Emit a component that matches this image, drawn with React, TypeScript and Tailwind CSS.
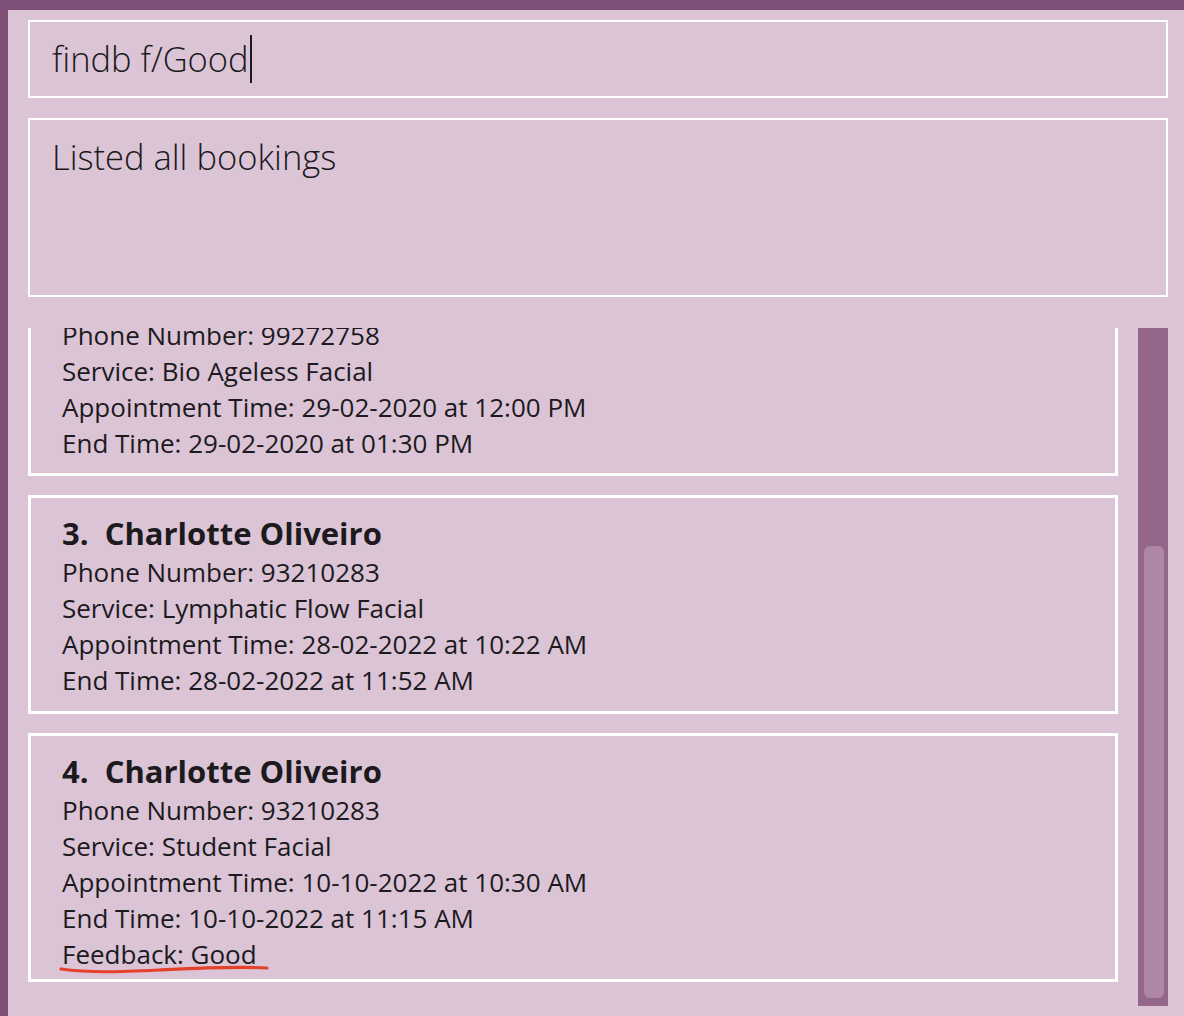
type Booking = {
  index: number;
  name?: string;
  phone: string;
  service: string;
  start: string;
  end: string;
  feedback?: string;
};

// first entry is scrolled past its header, so only the lower lines show
const bookings: Booking[] = [
  {
    index: 2,
    phone: "99272758",
    service: "Bio Ageless Facial",
    start: "29-02-2020 at 12:00 PM",
    end: "29-02-2020 at 01:30 PM",
  },
  {
    index: 3,
    name: "Charlotte Oliveiro",
    phone: "93210283",
    service: "Lymphatic Flow Facial",
    start: "28-02-2022 at 10:22 AM",
    end: "28-02-2022 at 11:52 AM",
  },
  {
    index: 4,
    name: "Charlotte Oliveiro",
    phone: "93210283",
    service: "Student Facial",
    start: "10-10-2022 at 10:30 AM",
    end: "10-10-2022 at 11:15 AM",
    feedback: "Good",
  },
];

const BookingCard = ({ booking, first }: { booking: Booking; first?: boolean }) => {
  return (
    <div
      className={`border-[3px] border-white pl-[31px] pt-[16px] ${first ? "-mt-[30px] pb-[12px]" : "pb-[13px]"}`}
    >
      {booking.name && (
        <div className="h-[40px] -mt-[1px] mb-[1px] flex items-center text-[31px] font-bold text-[#1c1a1d] whitespace-pre">
          {booking.index}.  {booking.name}
        </div>
      )}
      <div className="text-[26px] leading-[36px] text-[#1c1a1d]">
        <div>Phone Number: {booking.phone}</div>
        <div>Service: {booking.service}</div>
        <div>Appointment Time: {booking.start}</div>
        <div>End Time: {booking.end}</div>
        {booking.feedback && (
          <div className="relative w-fit h-[32px] -mb-[2px]">
            Feedback: {booking.feedback}
            <svg
              className="absolute left-[-3px] top-[27px]"
              width="212"
              height="12"
              viewBox="0 0 212 12"
              fill="none"
            >
              <path
                d="M2 6 C 30 10, 60 9, 100 7 C 140 5, 175 3, 208 5"
                stroke="#e4412a"
                strokeWidth="3.2"
                strokeLinecap="round"
              />
            </svg>
          </div>
        )}
      </div>
    </div>
  );
};

export default function App() {
  return (
    <div
      className="h-[1016px] w-full overflow-hidden bg-[#dbc4d6] border-t-[10px] border-l-[8px] border-[#7f5179] pt-[10px] pl-[20px] pr-[16px] flex flex-col"
      style={{ fontFamily: '"Open Sans", "Noto Sans", sans-serif' }}
    >
      <div className="h-[78px] border-2 border-white pl-[22px] flex items-center">
        <span className="text-[34.5px] font-light text-[#1a1a1a] leading-none">findb f/Good</span>
        <span className="w-[2px] h-[48px] bg-[#1a1a1a] ml-[1px]" />
      </div>
      <div className="mt-[20px] h-[179px] border-2 border-white pl-[22px] pt-[15px]">
        <div className="text-[34.5px] font-light text-[#1a1a1a] leading-[44px]">Listed all bookings</div>
      </div>
      <div className="mt-[31px] h-[678px] flex">
        <div className="flex-1 overflow-hidden flex flex-col gap-[19px]">
          {bookings.map((b, i) => (
            <BookingCard key={i} booking={b} first={i === 0} />
          ))}
        </div>
        <div className="ml-[20px] w-[30px] bg-[#93668a] pt-[218px] pb-[8px] pl-[6px] pr-[4px] flex flex-col">
          <div className="flex-1 bg-[#af87a6] rounded-[6px]" />
        </div>
      </div>
    </div>
  );
}
